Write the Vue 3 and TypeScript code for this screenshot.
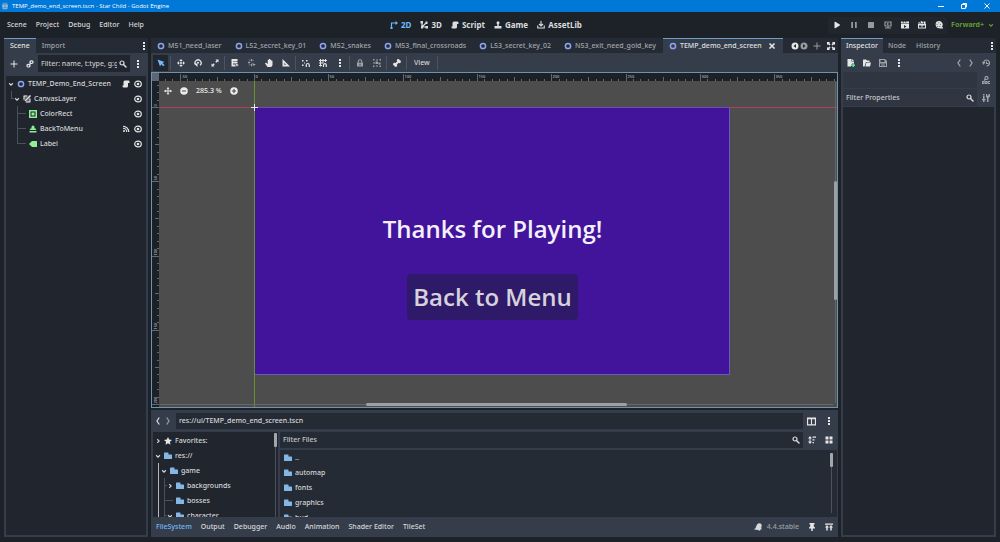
<script setup lang="ts">
import { ref } from 'vue'

interface TreeRow {
  name: string
  icon: string
  tone: string
  arrow?: 'open' | 'closed'
  guides: string[]
  leaf?: boolean
  script?: boolean
  signal?: boolean
}

const menus = ['Scene', 'Project', 'Debug', 'Editor', 'Help']
const workspaces = [
  { name: '2D', icon: 'ws2d' },
  { name: '3D', icon: 'ws3d' },
  { name: 'Script', icon: 'script' },
  { name: 'Game', icon: 'game' },
  { name: 'AssetLib', icon: 'asset' },
]
const workspace = ref('2D')
const runButtons = [
  { icon: 'play', label: 'Run project', dim: false },
  { icon: 'pause', label: 'Pause', dim: true },
  { icon: 'stop', label: 'Stop', dim: true },
  { icon: 'remote', label: 'Remote debug', dim: true },
  { icon: 'clapper', label: 'Run current scene', dim: false },
  { icon: 'clapperOpen', label: 'Run specific scene', dim: false },
  { icon: 'movie', label: 'Movie maker mode', dim: false },
]

const sceneTree: TreeRow[] = [
  { name: 'TEMP_Demo_End_Screen', icon: 'node', tone: 'blue', arrow: 'open', guides: [], script: true },
  { name: 'CanvasLayer', icon: 'layer', tone: 'light', arrow: 'open', guides: ['elbow'] },
  { name: 'ColorRect', icon: 'rect', tone: 'green', guides: ['blank', 'tee'], leaf: true },
  { name: 'BackToMenu', icon: 'button', tone: 'green', guides: ['blank', 'tee'], leaf: true, signal: true },
  { name: 'Label', icon: 'label', tone: 'green', guides: ['blank', 'elbow'], leaf: true },
]

const openScenes = [
  'M51_need_laser',
  'L52_secret_key_01',
  'M52_snakes',
  'M53_final_crossroads',
  'L53_secret_key_02',
  'N53_exit_need_gold_key',
]

const toolGroups = [
  ['move', 'rotate', 'scale'],
  ['list', 'pivot', 'hand', 'ruler'],
  ['snap', 'grid', 'dots'],
  ['lock', 'group'],
  ['bone'],
]
const dimTools = ['pivot', 'lock', 'group']

const fsTree: TreeRow[] = [
  { name: 'Favorites:', icon: 'star', tone: 'light', arrow: 'closed', guides: [] },
  { name: 'res://', icon: 'folder', tone: 'folder', arrow: 'open', guides: [] },
  { name: 'game', icon: 'folder', tone: 'folder', arrow: 'open', guides: ['bold'] },
  { name: 'backgrounds', icon: 'folder', tone: 'folder', arrow: 'closed', guides: ['bold', 'tee'] },
  { name: 'bosses', icon: 'folder', tone: 'folder', guides: ['bold', 'tee'], leaf: true },
  { name: 'character', icon: 'folder', tone: 'folder', arrow: 'open', guides: ['bold', 'tee'] },
]
const files = ['..', 'automap', 'fonts', 'graphics', 'hud']
const bottomTabs = ['FileSystem', 'Output', 'Debugger', 'Audio', 'Animation', 'Shader Editor', 'TileSet']
const bottomTab = ref('FileSystem')

/* Canvas view transform: pixels per unit and the origin inside the viewport */
const zoom = 1.486
const originX = 102
const originY = 34

function ticks(from: number, to: number, origin: number, skip: number) {
  const out: { pos: number; size: number; text: string }[] = []
  for (let u = from; u <= to; u += 5) {
    const pos = Math.round(origin + u * zoom) + 0.5
    if (pos < skip) continue
    out.push({
      pos,
      size: u % 50 === 0 ? 7 : u % 25 === 0 ? 4 : 2,
      text: u % 50 === 0 ? String(u) : '',
    })
  }
  return out
}
const ticksX = ticks(-65, 390, originX, 8)
const ticksY = ticks(-15, 200, originY, 9)
</script>

<template>
  <svg class="sprite" aria-hidden="true">
    <symbol id="add" viewBox="0 0 16 16"><path d="M7 1v6H1v2h6v6h2V9h6V7H9V1z" /></symbol>
    <symbol id="link" viewBox="0 0 16 16"><g fill="none" stroke="currentColor" stroke-width="2.4"><rect x="8" y="1.6" width="6" height="5.4" rx="2.4" /><rect x="2" y="8.6" width="6" height="5.4" rx="2.4" /><path d="M5.500 10.500l5-5" /></g></symbol>
    <symbol id="search" viewBox="0 0 16 16"><circle cx="6" cy="6" r="4" fill="none" stroke="currentColor" stroke-width="2.4" /><path d="M9 9l5 5" stroke="currentColor" stroke-width="3" stroke-linecap="round" /></symbol>
    <symbol id="dots" viewBox="0 0 16 16"><path d="M6 0h4v4H6zM6 6h4v4H6zM6 12h4v4H6z" /></symbol>
    <symbol id="node" viewBox="0 0 16 16"><circle cx="8" cy="8" r="5.200" fill="none" stroke="currentColor" stroke-width="3" /></symbol>
    <symbol id="layer" viewBox="0 0 16 16"><path d="M1 4a3 3 0 0 1 3-3h8L1 12zM14 4v8a3 3 0 0 1-3 3H4z" opacity=".35" /><path d="M1 1h7v2H3v6H1zM15 7v8H6v-2h7V7z" /><path d="M15 1L4 12" stroke="currentColor" stroke-width="3" /></symbol>
    <symbol id="rect" viewBox="0 0 16 16"><path d="M0 0h16v16H0zm3 3v10h10V3zM5 5h6v6H5z" fill-rule="evenodd" /></symbol>
    <symbol id="button" viewBox="0 0 16 16"><path d="M5 4a3 3 0 0 1 6 0v3h2a2 2 0 0 1 1 3H2a2 2 0 0 1 1-3h2zM1 12h14v3H1z" /></symbol>
    <symbol id="label" viewBox="0 0 16 16"><path d="M6 2L0 8l6 6h9a1 1 0 0 0 1-1V3a1 1 0 0 0-1-1z" /></symbol>
    <symbol id="script" viewBox="0 0 16 16"><path d="M6 1a3 3 0 0 0-3 3v7H1v1.500A2.500 2.500 0 0 0 3.500 15H9a3 3 0 0 0 3-3V6h3V3.500A2.500 2.500 0 0 0 12.500 1z" /></symbol>
    <symbol id="eye" viewBox="0 0 16 16"><ellipse cx="8" cy="8" rx="6.600" ry="5.800" fill="none" stroke="currentColor" stroke-width="2.400" /><circle cx="8" cy="8" r="2.600" /></symbol>
    <symbol id="signal" viewBox="0 0 16 16"><circle cx="4" cy="12" r="2" /><path d="M2 6.500A7.500 7.500 0 0 1 9.500 14M2 2.500A11.500 11.500 0 0 1 13.500 14" fill="none" stroke="currentColor" stroke-width="2.400" /></symbol>
    <symbol id="down" viewBox="0 0 16 16"><path d="M3 6l5 5 5-5" fill="none" stroke="currentColor" stroke-width="3" /></symbol>
    <symbol id="right" viewBox="0 0 16 16"><path d="M6 3l5 5-5 5" fill="none" stroke="currentColor" stroke-width="3" /></symbol>
    <symbol id="back" viewBox="0 0 16 16"><path d="M10.500 1L6 8l4.500 7" fill="none" stroke="currentColor" stroke-width="2.600" /></symbol>
    <symbol id="forward" viewBox="0 0 16 16"><path d="M5.500 1L10 8l-4.500 7" fill="none" stroke="currentColor" stroke-width="2.600" /></symbol>
    <symbol id="ws2d" viewBox="0 0 16 16"><path d="M3 15V4h9" fill="none" stroke="currentColor" stroke-width="2.400" /><path d="M11 0l5 4-5 4zM1 12h4v4H1z" /></symbol>
    <symbol id="ws3d" viewBox="0 0 16 16"><path d="M4 3v9h9M4 12l8-8" fill="none" stroke="currentColor" stroke-width="2.400" /><path d="M1 0h5v5H1zM11 1h4v5h-4zM11 10h5v5h-5zM2 10h4v5H2z" /></symbol>
    <symbol id="game" viewBox="0 0 16 16"><circle cx="8" cy="3.500" r="3" /><path d="M6.500 5h3v5H15v5H1v-5h5.500z" /></symbol>
    <symbol id="asset" viewBox="0 0 16 16"><path d="M8 0v9M4 6l4 4 4-4M1.500 9v5h13V9" fill="none" stroke="currentColor" stroke-width="2.200" /></symbol>
    <symbol id="play" viewBox="0 0 16 16"><path d="M3 2.500v11a1 1 0 0 0 1.500.9l9-5.500a1 1 0 0 0 0-1.800l-9-5.500a1 1 0 0 0-1.500.9z" /></symbol>
    <symbol id="pause" viewBox="0 0 16 16"><path d="M2.500 2H6v12H2.500zM10 2h3.500v12H10z" /></symbol>
    <symbol id="stop" viewBox="0 0 16 16"><rect x="2" y="2" width="12" height="12" rx="1" /></symbol>
    <symbol id="remote" viewBox="0 0 16 16"><path d="M2 2h12v8H2zM8 10v4M2 14h12" fill="none" stroke="currentColor" stroke-width="2.400" /><path d="M6 3.500l5 2.500-5 2.500z" /></symbol>
    <symbol id="clapper" viewBox="0 0 16 16"><path d="M0 1h3l1 2h2L5 1h3l1 2h2l-1-2h6v4H0zM0 6h16v9H0zm6 2v6l5-3z" fill-rule="evenodd" /></symbol>
    <symbol id="clapperOpen" viewBox="0 0 16 16"><path d="M0 4l3-2 1 2 2-1-1-2 3-1 1 2 2-1v4H0zM0 6h16v9H0zm2 3v4h12V9z" fill-rule="evenodd" /><path d="M6 9h4v2H6zM12 1h3v5h-3z" /></symbol>
    <symbol id="movie" viewBox="0 0 16 16"><path d="M7.500 0a7.200 7.200 0 1 0 2 14.300V15H16v-2.500h-3A7.200 7.200 0 0 0 7.500 0z" /><g fill="#4a4f58"><circle cx="7.500" cy="3.500" r="1.200" /><circle cx="4" cy="6.500" r="1.200" /><circle cx="11" cy="6.500" r="1.200" /><circle cx="5.500" cy="10.500" r="1.200" /><circle cx="9.500" cy="10.500" r="1.200" /></g></symbol>
    <symbol id="select" viewBox="0 0 16 16"><path d="M1 1l5 14 2.500-4.500 4 4 2.500-2.500-4-4L15 6z" /></symbol>
    <symbol id="move" viewBox="0 0 16 16"><path d="M8 0l3.500 4h-7zM8 16l3.500-4h-7zM0 8l4-3.500v7zM16 8l-4-3.500v7z" /><path d="M8 5v6M5 8h6" stroke="currentColor" stroke-width="2" /></symbol>
    <symbol id="rotate" viewBox="0 0 16 16"><path d="M3.500 11.500A6 6 0 1 1 12 12.500" fill="none" stroke="currentColor" stroke-width="2.600" /><path d="M0 9h7v7z" /><circle cx="8" cy="7.500" r="2" /></symbol>
    <symbol id="scale" viewBox="0 0 16 16"><path d="M9 1h6v6l-2-2-2.500 2.500-2-2L11 3zM7 15H1V9l2 2 2.500-2.500 2 2L5 13z" /></symbol>
    <symbol id="list" viewBox="0 0 16 16"><path d="M1 0h12v4H4v1h9v4H4v2h5v4H1z" /><path d="M9 9l7 3-3 1-1 3z" /></symbol>
    <symbol id="pivot" viewBox="0 0 16 16"><path d="M6 0h2v4H6zM0 6h4v2H0zM6 10h2v4H6zM1 1l3 3M12 2L9 5M1 13l3-3" stroke="currentColor" /><path d="M8 8l8 3-3 1-1 3z" /></symbol>
    <symbol id="hand" viewBox="0 0 16 16"><path d="M5.500 2a1.200 1.200 0 0 1 2.300 0V1a1.200 1.200 0 0 1 2.400 0v1a1.200 1.200 0 0 1 2.400 0v2a1.200 1.200 0 0 1 2.400 0v7a5 5 0 0 1-5 5H7c-2 0-3-1-4-3L0 9c0-1.500 2-2 3.500-.5l2 1.500z" /></symbol>
    <symbol id="ruler" viewBox="0 0 16 16"><path d="M1 0v15h15zm3.500 8l3.500 3.500H4.500z" fill-rule="evenodd" /></symbol>
    <symbol id="snap" viewBox="0 0 16 16"><path d="M0 2h3v3H0zM4 7h2v2H4zM0 11h3v3H0zM8 2h3v3H8z" /><path d="M8.500 16v-4a3 3 0 0 1 6 0v4" fill="none" stroke="currentColor" stroke-width="2.400" /></symbol>
    <symbol id="grid" viewBox="0 0 16 16"><path d="M3 0v15M8 0v8M13 0v6M0 3h16M0 8h8M0 13h6" fill="none" stroke="currentColor" stroke-width="2" /><path d="M9 16v-4a2.800 2.800 0 0 1 5.600 0v4" fill="none" stroke="currentColor" stroke-width="2.400" /></symbol>
    <symbol id="lock" viewBox="0 0 16 16"><path d="M4.500 7V5a3.500 3.500 0 0 1 7 0v2" fill="none" stroke="currentColor" stroke-width="2.200" /><path d="M2 7h12v8H2zM7 9v4h2V9z" fill-rule="evenodd" /></symbol>
    <symbol id="group" viewBox="0 0 16 16"><path d="M0 0h3v3H0zM13 0h3v3h-3zM0 13h3v3H0zM13 13h3v3h-3zM6 1h4v2H6zM1 6h2v4H1zM6 13h4v2H6zM5 5h5v5H5zM11 7h4v4h-4z" /></symbol>
    <symbol id="bone" viewBox="0 0 16 16"><path d="M4.500 11.500l7-7" stroke="currentColor" stroke-width="4" /><circle cx="10.500" cy="3" r="2.800" /><circle cx="13" cy="5.500" r="2.800" /><circle cx="3" cy="10.500" r="2.800" /><circle cx="5.500" cy="13" r="2.800" /></symbol>
    <symbol id="star" viewBox="0 0 16 16"><path d="M8 0l2.400 5.200 5.600.7-4.200 3.800 1.200 5.800L8 12.700l-5 2.800 1.200-5.800L0 5.900l5.600-.7z" /></symbol>
    <symbol id="folder" viewBox="0 0 16 16"><path d="M1 1a1 1 0 0 0-1 1v11a1 1 0 0 0 1 1h14a1 1 0 0 0 1-1V6a1 1 0 0 0-1-1H9V2a1 1 0 0 0-1-1z" /></symbol>
    <symbol id="close" viewBox="0 0 16 16"><path d="M3 3l10 10M13 3L3 13" stroke="currentColor" stroke-width="3.200" /></symbol>
    <symbol id="prev" viewBox="0 0 16 16"><path d="M8 1a7 7 0 1 0 0 14A7 7 0 0 0 8 1zm2 3v8L5 8z" fill-rule="evenodd" /></symbol>
    <symbol id="next" viewBox="0 0 16 16"><path d="M8 1a7 7 0 1 0 0 14A7 7 0 0 0 8 1zM6 4v8l5-4z" fill-rule="evenodd" /></symbol>
    <symbol id="expand" viewBox="0 0 16 16"><path d="M0 0h6L4.500 2 7 5 5 7 2 4.500 0 6zM16 0v6l-2-1.500L11 7 9 5l2.500-3L10 0zM0 16v-6l2 1.500L5 9l2 2-2.500 3L6 16zM16 16h-6l1.500-2L9 11l2-2 3 2.500 2-1.500z" /></symbol>
    <symbol id="center" viewBox="0 0 16 16"><path d="M7.200 0h1.600v16H7.200zM0 7.200h16v1.600H0z" /><path d="M5 2l3 3.500L11 2zM5 14l3-3.500 3 3.500zM2 5v6l3.500-3zM14 5v6l-3.500-3z" opacity=".8" /></symbol>
    <symbol id="minus" viewBox="0 0 16 16"><path d="M8 .5a7.500 7.500 0 1 0 0 15 7.500 7.500 0 0 0 0-15zM4 6.800h8v2.400H4z" fill-rule="evenodd" /></symbol>
    <symbol id="plus" viewBox="0 0 16 16"><path d="M8 .5a7.500 7.500 0 1 0 0 15 7.500 7.500 0 0 0 0-15zM6.800 4h2.400v2.800H12v2.400H9.200V12H6.800V9.200H4V6.800h2.800z" fill-rule="evenodd" /></symbol>
    <symbol id="newRes" viewBox="0 0 16 16"><path d="M1 0h8v5h5v4h-4v2H8v4H1z" /><path d="M10 0l4 4h-4z" /><path d="M11 8h3v3h2v3h-2v2h-3v-2H8v-3h3z" fill="#5fdd87" /></symbol>
    <symbol id="load" viewBox="0 0 16 16"><path d="M0 2a1 1 0 0 1 1-1h5l2 2h5v3H6l-2 6-1 3H1a1 1 0 0 1-1-1zM7 7h9l-2 8H4.500z" /></symbol>
    <symbol id="save" viewBox="0 0 16 16"><path d="M0 0h12l4 4v12H0zm3 2v4h8V2zM2 9v5h12V9z" fill-rule="evenodd" /><path d="M5 9h2v6H5zM9 9h2v6H9z" /></symbol>
    <symbol id="history" viewBox="0 0 16 16"><path d="M3 8a6 6 0 1 1 6 6" fill="none" stroke="currentColor" stroke-width="2.400" /><path d="M0 6h7l-4 6z" /><path d="M8 5h2v3h3v2H8z" /></symbol>
    <symbol id="doc" viewBox="0 0 16 16"><circle cx="9" cy="4" r="3" fill="none" stroke="currentColor" stroke-width="2.400" /><path d="M7 6L4 9" stroke="currentColor" stroke-width="2.400" /><path d="M0 10h5v6H0zm1.800 1.800v2.400h1.200v-2.400zM5.700 10h5v6h-5zm1.800 1.800v2.400h1.200v-2.400zM11.400 10H16v1.800h-2.600v2.400H16V16h-4.600z" fill-rule="evenodd" /></symbol>
    <symbol id="tools" viewBox="0 0 16 16"><path d="M2 4h3v12H2zM0 10h7v2.500H0zM2 0h3v3H2zM8 0h2v3h3V0h3v5l-3 3v8h-3V8L8 6z" /></symbol>
    <symbol id="split" viewBox="0 0 16 16"><path d="M0 1h16v14H0zm2 3v9h5V4zm7 0v9h5V4z" fill-rule="evenodd" /></symbol>
    <symbol id="sort" viewBox="0 0 16 16"><path d="M4 0l4 5H5v6h3l-4 5-4-5h3V5H0zM9 1h7v2.500H9zM9 6.500h4V9H9zM9 12h3v2.500H9z" /></symbol>
    <symbol id="tiles" viewBox="0 0 16 16"><path d="M1 1h6v6H1zM9 1h6v6H9zM1 9h6v6H1zM9 9h6v6H9z" /></symbol>
    <symbol id="bell" viewBox="0 0 16 16"><path d="M6 3c3-4 9-3 9.500 2l-1 4 .5 4-3 .5-1 2.500-2.500-2L0 13c1-1.500 3-2 3.500-4z" /></symbol>
    <symbol id="pin" viewBox="0 0 16 16"><path d="M3 0h10v3h-1.500v4L14 9v2H9.500v5h-3v-5H2V9l2.500-2V3H3z" /></symbol>
    <symbol id="dock" viewBox="0 0 16 16"><path d="M0 1h16v2.500H0zM4 4l4 5H5.500v6h-3V9H0zM12 4l4 5h-2.500v6h-3V9H8z" /></symbol>
    <symbol id="godot" viewBox="0 0 16 16"><path d="M2 4l2-1 1-2 2 1h2l2-1 1 2 2 1v9l-3 2H5l-3-2z" fill="#5d9bd0" /><circle cx="5" cy="8" r="2" fill="#a9c6e0" /><circle cx="11" cy="8" r="2" fill="#a9c6e0" /><path d="M4 12h8v1H4z" fill="#a9c6e0" /></symbol>
  </svg>

  <div class="editor">
    <header class="titlebar">
      <svg class="ic"><use href="#godot" /></svg>
      <span class="title">TEMP_demo_end_screen.tscn - Star Child - Godot Engine</span>
      <button class="win" aria-label="Minimize"><svg viewBox="0 0 8 8"><path d="M1 4.500h6" /></svg></button>
      <button class="win" aria-label="Restore"><svg viewBox="0 0 8 8"><path d="M1.500 2.500h4v4h-4zM3 2.500v-1h3.500V5h-1" /></svg></button>
      <button class="win" aria-label="Close"><svg viewBox="0 0 8 8"><path d="M1.500 1.500l5 5M6.500 1.500l-5 5" /></svg></button>
    </header>

    <div class="menubar">
      <nav class="menus">
        <button v-for="m in menus" :key="m">{{ m }}</button>
      </nav>
      <div class="workspaces">
        <button v-for="w in workspaces" :key="w.name" :class="{ on: workspace === w.name }" @click="workspace = w.name">
          <svg class="ic"><use :href="'#' + w.icon" /></svg>{{ w.name }}
        </button>
      </div>
      <div class="runside">
        <div class="runbox">
          <button v-for="r in runButtons" :key="r.icon" :class="{ dim: r.dim }" :aria-label="r.label">
            <svg class="ic"><use :href="'#' + r.icon" /></svg>
          </button>
        </div>
        <button class="renderer">Forward+<svg class="ic small"><use href="#down" /></svg></button>
      </div>
    </div>

    <main class="columns">
      <section class="dock left">
        <div class="tabs">
          <button class="tab on">Scene</button>
          <button class="tab">Import</button>
          <button class="icon end" aria-label="Dock options"><svg class="ic"><use href="#dots" /></svg></button>
        </div>
        <div class="panel">
          <div class="scenebar">
            <button class="icon" aria-label="Add node"><svg class="ic"><use href="#add" /></svg></button>
            <button class="icon" aria-label="Instance scene"><svg class="ic"><use href="#link" /></svg></button>
            <label class="field">
              <input type="text" aria-label="Filter nodes" placeholder="Filter: name, t:type, g:group" />
              <svg class="ic"><use href="#search" /></svg>
            </label>
            <button class="icon" aria-label="Scene options"><svg class="ic"><use href="#dots" /></svg></button>
          </div>
          <div class="well">
            <div v-for="row in sceneTree" :key="row.name" class="row">
              <span v-for="(g, i) in row.guides" :key="i" class="guide" :class="g"></span>
              <span class="arrow" :class="{ leaf: row.leaf }"><svg v-if="row.arrow"><use href="#down" /></svg></span>
              <svg class="ic" :class="row.tone"><use :href="'#' + row.icon" /></svg>
              <span class="name">{{ row.name }}</span>
              <svg v-if="row.script" class="ic mark"><use href="#script" /></svg>
              <svg v-if="row.signal" class="ic mark"><use href="#signal" /></svg>
              <button class="vis" :aria-label="'Toggle visibility of ' + row.name"><svg class="ic"><use href="#eye" /></svg></button>
            </div>
          </div>
        </div>
      </section>

      <section class="center">
        <div class="tabs scenes">
          <button v-for="s in openScenes" :key="s" class="tab"><svg class="ic blue"><use href="#node" /></svg>{{ s }}</button>
          <button class="tab on"><svg class="ic blue"><use href="#node" /></svg>TEMP_demo_end_screen<svg class="ic x"><use href="#close" /></svg></button>
          <div class="tabtools">
            <button class="icon" aria-label="Previous tab"><svg class="ic"><use href="#prev" /></svg></button>
            <button class="icon dim" aria-label="Next tab"><svg class="ic"><use href="#next" /></svg></button>
            <button class="icon dim wide" aria-label="New scene"><svg class="ic"><use href="#add" /></svg></button>
            <button class="icon" aria-label="Distraction free mode"><svg class="ic"><use href="#expand" /></svg></button>
          </div>
        </div>
        <div class="toolbar">
          <button class="tool on" aria-label="Select"><svg class="ic"><use href="#select" /></svg></button>
          <template v-for="(g, i) in toolGroups" :key="i">
            <i class="sep"></i>
            <button v-for="t in g" :key="t" class="tool" :class="{ dim: dimTools.includes(t) }" :aria-label="t"><svg class="ic"><use :href="'#' + t" /></svg></button>
          </template>
          <i class="sep"></i>
          <button class="view">View</button>
          <i class="sep"></i>
        </div>

        <div class="viewport">
          <div class="stage">
            <p class="thanks">Thanks for Playing!</p>
            <button class="backbtn">Back to Menu</button>
          </div>
          <svg class="overlay" aria-hidden="true">
            <rect :x="originX + 0.5" :y="originY + 0.5" width="475" height="267" fill="none" stroke="#6a57c4" />
            <rect x="8" :y="originY" width="100%" height="1" fill="#b0405a" />
            <rect :x="originX" y="8" width="1" height="100%" fill="#69912f" />
            <rect :x="originX + 1" :y="originY" width="475" height="1" fill="#6a4fb4" />
            <path d="M99 34.500h7M102.500 31v7" stroke="#e6e6f2" />
            <rect width="100%" height="8" fill="#1c2027" />
            <rect width="7" height="100%" fill="#1c2027" />
            <g stroke="#626871">
              <line v-for="t in ticksX" :key="t.pos" :x1="t.pos" :x2="t.pos" :y1="8 - t.size" y2="8" />
              <line v-for="t in ticksY" :key="t.pos" :x1="7 - t.size" x2="7" :y1="t.pos" :y2="t.pos" />
            </g>
            <g class="nums">
              <template v-for="t in ticksX" :key="t.pos"><text v-if="t.text" :x="t.pos + 1" y="5">{{ t.text }}</text></template>
              <template v-for="t in ticksY" :key="t.pos"><text v-if="t.text" :transform="`translate(5 ${t.pos - 1}) rotate(-90)`">{{ t.text }}</text></template>
            </g>
            <rect width="7" height="8" fill="#5c6674" />
          </svg>
          <div class="zoombar">
            <button aria-label="Center view"><svg class="ic"><use href="#center" /></svg></button>
            <button aria-label="Zoom out"><svg class="ic"><use href="#minus" /></svg></button>
            <button class="pct">285.3 %</button>
            <button aria-label="Zoom in"><svg class="ic"><use href="#plus" /></svg></button>
          </div>
          <div class="hbar"><i></i></div>
          <div class="vbar"><i></i></div>
        </div>

        <div class="bottom">
          <div class="pathrow">
            <button class="nav" aria-label="Back"><svg class="ic"><use href="#back" /></svg></button>
            <button class="nav dim" aria-label="Forward"><svg class="ic"><use href="#forward" /></svg></button>
            <input class="path" type="text" aria-label="Path" value="res://ui/TEMP_demo_end_screen.tscn" />
            <button class="icon" aria-label="Split mode"><svg class="ic big"><use href="#split" /></svg></button>
            <button class="icon" aria-label="File options"><svg class="ic"><use href="#dots" /></svg></button>
          </div>
          <div class="fs">
            <div class="fstree">
              <div class="rows">
                <div v-for="row in fsTree" :key="row.name" class="row">
                  <span v-for="(g, i) in row.guides" :key="i" class="guide" :class="g"></span>
                  <span class="arrow" :class="{ leaf: row.leaf }"><svg v-if="row.arrow"><use :href="row.arrow === 'open' ? '#down' : '#right'" /></svg></span>
                  <svg class="ic" :class="row.tone"><use :href="'#' + row.icon" /></svg>
                  <span class="name">{{ row.name }}</span>
                </div>
              </div>
              <div class="track"><i></i></div>
            </div>
            <div class="filepane">
              <div class="filterrow">
                <label class="field">
                  <input type="text" aria-label="Filter Files" placeholder="Filter Files" />
                  <svg class="ic"><use href="#search" /></svg>
                </label>
                <button class="icon" aria-label="Sort files"><svg class="ic"><use href="#sort" /></svg></button>
                <button class="icon" aria-label="Thumbnail view"><svg class="ic"><use href="#tiles" /></svg></button>
              </div>
              <div class="filelist">
                <ul>
                  <li v-for="f in files" :key="f"><svg class="ic folder"><use href="#folder" /></svg>{{ f }}</li>
                </ul>
                <div class="track"><i></i></div>
              </div>
            </div>
          </div>
          <div class="bottomtabs">
            <button v-for="b in bottomTabs" :key="b" :class="{ on: bottomTab === b }" @click="bottomTab = b">{{ b }}</button>
            <div class="status">
              <svg class="ic"><use href="#bell" /></svg>
              <button class="version">4.4.stable</button>
              <button class="icon" aria-label="Pin panel"><svg class="ic"><use href="#pin" /></svg></button>
              <button class="icon" aria-label="Expand panel"><svg class="ic"><use href="#dock" /></svg></button>
            </div>
          </div>
        </div>
      </section>

      <section class="dock right">
        <div class="tabs">
          <button class="tab on">Inspector</button>
          <button class="tab">Node</button>
          <button class="tab">History</button>
          <button class="icon end" aria-label="Dock options"><svg class="ic"><use href="#dots" /></svg></button>
        </div>
        <div class="panel">
          <div class="resbar">
            <div class="resfile">
              <button class="icon" aria-label="New resource"><svg class="ic"><use href="#newRes" /></svg></button>
              <button class="icon" aria-label="Load resource"><svg class="ic"><use href="#load" /></svg></button>
              <button class="icon dim" aria-label="Save resource"><svg class="ic"><use href="#save" /></svg></button>
              <button class="icon" aria-label="Resource options"><svg class="ic"><use href="#dots" /></svg></button>
            </div>
            <button class="icon dim thin" aria-label="Previous object"><svg class="ic"><use href="#back" /></svg></button>
            <button class="icon dim thin" aria-label="Next object"><svg class="ic"><use href="#forward" /></svg></button>
            <button class="icon dim" aria-label="Object history"><svg class="ic"><use href="#history" /></svg></button>
          </div>
          <div class="objrow">
            <div class="objbox"></div>
            <button class="icon dim" aria-label="Open documentation"><svg class="ic"><use href="#doc" /></svg></button>
          </div>
          <div class="objrow">
            <label class="field">
              <input type="text" aria-label="Filter Properties" placeholder="Filter Properties" />
              <svg class="ic"><use href="#search" /></svg>
            </label>
            <button class="icon dim" aria-label="Manage object properties"><svg class="ic"><use href="#tools" /></svg></button>
          </div>
          <div class="well"></div>
        </div>
      </section>
    </main>
  </div>
</template>

<style>
body {
  margin: 0;
  background: #1d2229;
}
</style>

<style scoped>
.sprite {
  position: absolute;
  width: 0;
  height: 0;
}
.editor {
  display: flex;
  flex-direction: column;
  height: 100vh;
  overflow: hidden;
  background: #1d2229;
  color: #d6d8db;
  font: 500 7px/10px "Noto Sans", "Open Sans", sans-serif;
}
button,
input {
  margin: 0;
  padding: 0;
  border: 0;
  background: none;
  color: inherit;
  font: inherit;
  white-space: nowrap;
}
input {
  min-width: 0;
  outline: 0;
}
input::placeholder {
  color: #c6c9cd;
  opacity: 1;
}
svg {
  fill: currentColor;
}
.ic {
  flex: none;
  display: block;
  width: 8px;
  height: 8px;
}
.ic.big {
  width: 9px;
  height: 9px;
}
.ic.small {
  width: 6px;
  height: 6px;
}
.blue { color: #8da5f3; }
.green { color: #8eef97; }
.light { color: #e6e6e6; }
.folder { color: #86b7e4; }
.icon {
  display: grid;
  place-items: center;
  flex: none;
  width: 17px;
  color: #e6e6e6;
}
.dim { opacity: 0.6; }

.titlebar {
  display: flex;
  align-items: center;
  height: 12px;
  padding: 0 2px 0 1px;
  background: #0078d7;
  color: #fff;
  font-family: "Open Sans", "Noto Sans", sans-serif;
  font-size: 6px;
}
.title {
  flex: 1;
  margin-left: 3px;
}
.win {
  width: 23px;
  display: grid;
  place-items: center;
}
.win svg {
  width: 8px;
  height: 8px;
  fill: none;
  stroke: #fff;
}

.menubar {
  display: flex;
  align-items: center;
  justify-content: space-between;
  height: 26px;
  padding: 0 6px 0 7px;
}
.menus {
  display: flex;
  gap: 9px;
}
.workspaces {
  display: flex;
  gap: 9px;
  font-size: 8px;
  font-weight: 700;
}
.workspaces button {
  display: flex;
  align-items: center;
  gap: 3px;
  color: #dadcde;
}
.workspaces .on {
  color: #70bafa;
}
.runside {
  display: flex;
  align-items: center;
  gap: 4px;
}
.runbox {
  display: flex;
  height: 17px;
  background: #21262e;
  border-radius: 2px;
}
.runbox button {
  display: grid;
  place-items: center;
  width: 17px;
  color: #e6e6e6;
}
.renderer {
  display: flex;
  align-items: center;
  gap: 4px;
  color: #5d9a33;
  font-weight: 700;
}

.columns {
  flex: 1;
  min-height: 0;
  display: flex;
  gap: 3px;
  padding: 0 4px 5px;
}
.dock {
  display: flex;
  flex-direction: column;
  flex: none;
}
.left { width: 144px; }
.right { width: 155px; }
.tabs {
  display: flex;
  flex: none;
  height: 15px;
  background: #252b34;
}
.tab {
  padding: 0 6px;
  border-top: 1px solid transparent;
  color: #a2a5aa;
}
.right .tab {
  padding: 0 5px;
}
.tab.on {
  background: #363d4a;
  border-top-color: #6b9fcb;
  color: #dfe0e2;
}
.end {
  width: 9px;
  margin-left: auto;
}
.panel {
  flex: 1;
  display: flex;
  flex-direction: column;
  padding: 0 2px 2px;
  background: #363d4a;
}
.well {
  flex: 1;
  background: #21262e;
}
.field {
  flex: 1;
  min-width: 0;
  display: flex;
  align-items: center;
  gap: 2px;
  padding: 0 3px;
  height: 17px;
  background: #21262e;
  box-sizing: border-box;
}
.field input {
  flex: 1;
}
.field .ic {
  color: #dadcde;
}
.scenebar {
  display: flex;
  height: 18px;
  padding: 2px 0 3px;
}
.scenebar .icon {
  width: 16px;
}

.row {
  display: flex;
  align-items: center;
  height: 15px;
  padding: 0 4px 0 2px;
}
.arrow {
  flex: none;
  width: 6px;
  height: 15px;
  margin-right: 3px;
  display: grid;
  place-items: center;
}
.arrow svg {
  width: 6px;
  height: 6px;
}
.arrow.leaf {
  background: linear-gradient(#4b515b, #4b515b) 0 7px / 6px 1px no-repeat;
}
.guide {
  flex: none;
  width: 6px;
  height: 15px;
  background-repeat: no-repeat;
}
.tee {
  background-image: linear-gradient(#4b515b, #4b515b), linear-gradient(#4b515b, #4b515b);
  background-position: 3px 0, 3px 7px;
  background-size: 1px 15px, 3px 1px;
}
.elbow {
  background-image: linear-gradient(#4b515b, #4b515b), linear-gradient(#4b515b, #4b515b);
  background-position: 3px 0, 3px 7px;
  background-size: 1px 8px, 3px 1px;
}
.bold {
  background-image: linear-gradient(#b4b7bb, #b4b7bb);
  background-position: 3px 0;
  background-size: 1px 15px;
}
.name {
  flex: 1;
  margin-left: 3px;
  white-space: nowrap;
}
.mark {
  color: #e6e6e6;
  margin-right: 4px;
}
.vis {
  color: #e6e6e6;
}

.center {
  flex: 1;
  min-width: 0;
  display: flex;
  flex-direction: column;
}
.scenes .tab {
  display: flex;
  align-items: center;
  gap: 3px;
  padding: 0 7px 0 6px;
}
.scenes .x {
  margin-left: 3px;
  color: #e6e6e6;
}
.tabtools {
  margin-left: auto;
  display: flex;
  padding-right: 3px;
}
.tabtools .icon {
  width: 9px;
}
.tabtools .wide {
  width: 18px;
}
.toolbar {
  display: flex;
  align-items: center;
  gap: 2px;
  height: 19px;
  padding: 0 2px;
  background: #363d4a;
}
.tool {
  display: grid;
  place-items: center;
  width: 15px;
  height: 16px;
  color: #e6e6e6;
}
.tool.on {
  background: #21262e;
  color: #70bafa;
}
.sep {
  width: 1px;
  height: 14px;
  background: #4d535f;
}
.view {
  padding: 0 5px;
}

.viewport {
  position: relative;
  flex: 1;
  min-height: 0;
  overflow: hidden;
  border: 1px solid #6b93b3;
  background: #4d4d4d;
}
.stage {
  position: absolute;
  left: 103px;
  top: 35px;
  width: 475px;
  height: 266px;
  display: flex;
  flex-direction: column;
  align-items: center;
  background: #41149b;
  font: 600 24px/34px "Open Sans", "Noto Sans", sans-serif;
}
.thanks {
  margin: 104px 0 28px;
  color: #f4f0fb;
}
.backbtn {
  padding: 6px;
  border-radius: 4px;
  background: #2e1a69;
  color: #d6d2dc;
}
.overlay {
  position: absolute;
  inset: 0;
  width: 100%;
  height: 100%;
}
.nums {
  font-size: 4px;
  fill: #b3b7bd;
}
.zoombar {
  position: absolute;
  left: 12px;
  top: 13px;
  display: flex;
  align-items: center;
  gap: 8px;
  color: #ececec;
}
.hbar,
.vbar {
  position: absolute;
  display: flex;
}
.hbar {
  left: 8px;
  right: 4px;
  bottom: 1px;
  height: 3px;
  padding-left: 30%;
  background: linear-gradient(#676767, #676767) 0 1px / 100% 1px no-repeat;
}
.hbar i {
  width: 56%;
  border-radius: 2px;
  background: #a0a0a0;
}
.vbar {
  right: 0;
  top: 9px;
  bottom: 4px;
  width: 3px;
  flex-direction: column;
  background: linear-gradient(#676767, #676767) 1px 0 / 1px 100% no-repeat;
}
.vbar i {
  height: 37%;
  margin-top: 99px;
  border-radius: 2px;
  background: #a0a0a0;
}

.bottom {
  margin-top: 2px;
  padding: 3px 1px 0 2px;
  background: #363d4a;
}
.pathrow {
  display: flex;
  height: 16px;
  margin-bottom: 3px;
}
.nav {
  width: 10px;
  display: grid;
  place-items: center;
}
.path {
  flex: 1;
  margin-left: 3px;
  padding: 0 3px;
  background: #252b34;
}
.fs {
  display: flex;
  gap: 2px;
  height: 85px;
}
.fstree {
  display: flex;
  width: 125px;
  padding: 1px 1px 0 0;
  background: #21262e;
  overflow: hidden;
  box-sizing: border-box;
}
.rows {
  flex: 1;
}
.track {
  flex: none;
  width: 3px;
  background: linear-gradient(#4d525a, #4d525a) 1px 0 / 1px 100% no-repeat;
}
.track i {
  display: block;
  height: 14px;
  border-radius: 1px;
  background: #a3a6aa;
}
.filepane {
  flex: 1;
  display: flex;
  flex-direction: column;
  gap: 2px;
  min-width: 0;
}
.filterrow {
  display: flex;
}
.filterrow .field {
  height: 16px;
  background: #252b34;
}
.filelist {
  flex: 1;
  min-height: 0;
  overflow: hidden;
  display: flex;
  padding: 0 4px 4px;
  background: #252b34;
}
.filelist ul {
  flex: 1;
  margin: 0;
  padding: 0;
  list-style: none;
}
.filelist li {
  display: flex;
  align-items: center;
  gap: 3px;
  height: 15px;
}
.filelist .track {
  margin-top: 3px;
}
.bottomtabs {
  display: flex;
  gap: 9px;
  height: 20px;
  padding-left: 3px;
}
.bottomtabs .on {
  color: #70bafa;
}
.status {
  display: flex;
  align-items: center;
  margin-left: auto;
}
.version {
  margin: 0 4px 0 5px;
  color: #9da1a8;
}

.resbar {
  display: flex;
  height: 19px;
}
.resfile {
  flex: 1;
  display: flex;
}
.resfile .icon {
  width: 16px;
}
.resbar .thin {
  width: 12px;
}
.objrow {
  display: flex;
  margin-bottom: 1px;
}
.objbox {
  flex: 1;
  height: 16px;
  background: #2f3541;
}
.objrow .field {
  background: #2f3541;
}
</style>
